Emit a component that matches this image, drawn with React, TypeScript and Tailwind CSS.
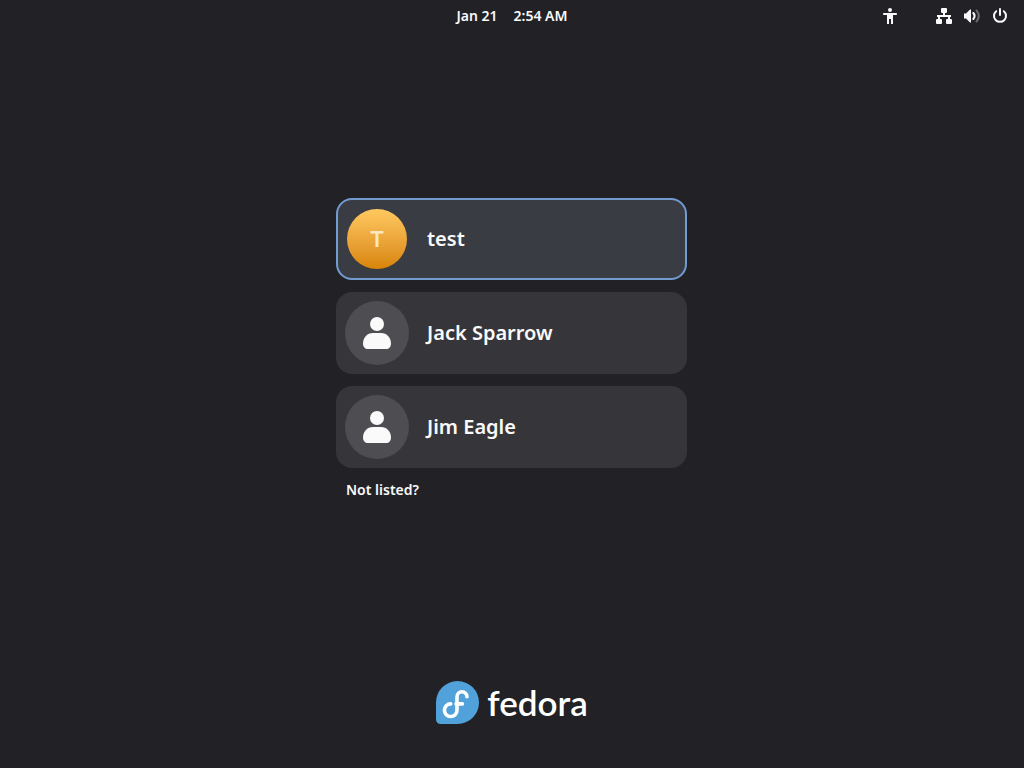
import React from "react";

type User = { name: string; initial?: string };

const users: User[] = [
  { name: "test", initial: "T" },
  { name: "Jack Sparrow" },
  { name: "Jim Eagle" },
];

function AccessibilityIcon() {
  return (
    <svg viewBox="0 0 16 16" className="size-4" fill="currentColor" aria-hidden="true">
      <circle cx="8" cy="2" r="2" />
      <path d="M1.8 5h12.4a.8.8 0 0 1 .8.8v.4a.8.8 0 0 1-.8.8H11v9H9v-5H7v5H5V7H1.8a.8.8 0 0 1-.8-.8v-.4a.8.8 0 0 1 .8-.8z" />
    </svg>
  );
}

function NetworkIcon() {
  return (
    <svg viewBox="0 0 16 16" className="size-4" fill="currentColor" aria-hidden="true">
      <rect x="5" y="0" width="6" height="5" rx="1" />
      <path d="M7 4h2v3h6v2h-1v3h-2V9H4v3H2V9H1V7h6z" />
      <rect x="0" y="11" width="6" height="5" rx="1" />
      <rect x="10" y="11" width="6" height="5" rx="1" />
    </svg>
  );
}

function VolumeIcon() {
  return (
    <svg viewBox="0 0 16 16" className="size-4" fill="none" aria-hidden="true">
      <path d="M0 5.5h2L6 1.4h1v13.2H6L2 10.5H0z" fill="currentColor" />
      <path d="M9.3 5Q11.9 8 9.3 11" stroke="currentColor" strokeWidth="2" strokeLinecap="round" />
      <path d="M12.6 2.6Q17 8 12.6 13.4" stroke="currentColor" strokeOpacity=".35" strokeWidth="2" strokeLinecap="round" />
    </svg>
  );
}

function PowerIcon() {
  return (
    <svg viewBox="0 0 16 16" className="size-4" fill="none" stroke="currentColor" strokeWidth="2" strokeLinecap="round" aria-hidden="true">
      <path d="M4.2 3.2a6 6 0 1 0 7.6 0" />
      <path d="M8 1v6" />
    </svg>
  );
}

function PersonIcon() {
  return (
    <svg viewBox="0 0 32 32" className="size-8" fill="currentColor" aria-hidden="true">
      <circle cx="16" cy="7" r="7" />
      <path d="M12 16h8c6 0 10 5 10 10.500C30 30 28 32 25 32H7c-3 0-5-2-5-5.500C2 21 6 16 12 16z" />
    </svg>
  );
}

function FedoraMark() {
  return (
    <svg viewBox="0 0 43 43" className="size-[43px]" fill="none" aria-hidden="true">
      <path d="M21.500 0A21.500 21.500 0 0 1 21.500 43H4.500A4.500 4.500 0 0 1 0 38.500V21.500A21.500 21.500 0 0 1 21.500 0z" fill="#51a2da" />
      <g stroke="#fff" strokeWidth="3.600" strokeLinecap="round" strokeLinejoin="round">
        <path d="M31 15.800a5 5 0 0 0-10 0v13.400a6.300 6.300 0 1 1-6.300-6.300" />
        <path d="M20 22.900H26.400" />
      </g>
    </svg>
  );
}

function UserCard({ user }: { user: User }) {
  const selected = Boolean(user.initial);
  return (
    <button
      type="button"
      className={
        selected
          ? "flex w-full items-center gap-[18px] rounded-2xl border-2 border-[#729bd0] bg-[#3a3c44] px-[7px] py-[7px] text-left"
          : "flex w-full items-center gap-[18px] rounded-2xl bg-[#363539] px-[9px] py-[9px] text-left"
      }
    >
      {selected ? (
        <span className="flex size-16 items-center justify-center">
          <span className="flex size-[60px] items-center justify-center rounded-full bg-linear-to-b from-[#ffc95f] to-[#d88500] font-[Inter] text-[22px] font-semibold text-[#ffe7c2]">
            {user.initial}
          </span>
        </span>
      ) : (
        <span className="flex size-16 items-center justify-center rounded-full bg-[#4e4d52] text-[#fafafb]">
          <PersonIcon />
        </span>
      )}
      <span className="text-xl font-semibold">{user.name}</span>
    </button>
  );
}

export default function App() {
  return (
    <div className="flex min-h-screen flex-col bg-[#222226] font-['Noto_Sans',sans-serif] text-[#fafafb]">
      <header className="grid h-8 grid-cols-[1fr_auto_1fr] items-center text-sm font-semibold">
        <span />
        <button type="button" className="flex gap-4">
          <span>Jan 21</span>
          <span>2:54 AM</span>
        </button>
        <div className="flex items-center gap-[38px] justify-self-end pr-4">
          <button type="button" aria-label="Accessibility">
            <AccessibilityIcon />
          </button>
          <button type="button" aria-label="System menu" className="flex gap-3">
            <NetworkIcon />
            <VolumeIcon />
            <PowerIcon />
          </button>
        </div>
      </header>

      <main className="flex grow flex-col items-center pt-[166px]">
        <div className="w-full max-w-[352px] pr-px">
          <ul className="flex flex-col gap-3">
            {users.map((user) => (
              <li key={user.name}>
                <UserCard user={user} />
              </li>
            ))}
          </ul>
          <button type="button" className="mt-3 px-2.5 text-sm font-semibold">
            Not listed?
          </button>
        </div>
      </main>

      <footer className="flex items-center justify-center gap-2 pb-11">
        <FedoraMark />
        <span className="font-[Lato] text-[35px] leading-[43px] font-semibold text-white">fedora</span>
      </footer>
    </div>
  );
}
